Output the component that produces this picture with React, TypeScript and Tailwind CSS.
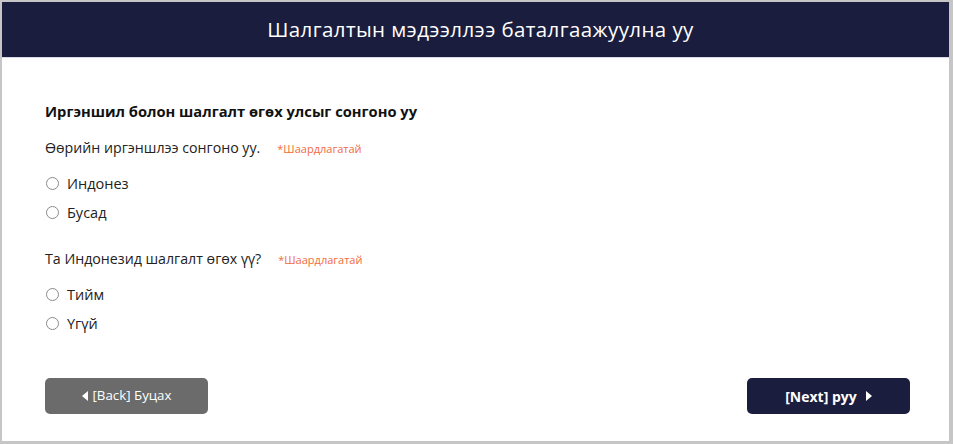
import { useState } from "react";

const font = { fontFamily: '"Open Sans", "Noto Sans", sans-serif' };

type Q = { label: string; name: string; options: string[] };

const questions: Q[] = [
  { label: "Өөрийн иргэншлээ сонгоно уу.", name: "citizenship", options: ["Индонез", "Бусад"] },
  { label: "Та Индонезид шалгалт өгөх үү?", name: "country", options: ["Тийм", "Үгүй"] },
];

function Radio({ checked, onClick, label }: { checked: boolean; onClick: () => void; label: string }) {
  return (
    <label className="flex items-center gap-[8px] h-[29px] pl-[1px] cursor-pointer" onClick={onClick}>
      <span className="w-[13px] h-[13px] rounded-full border border-[#8a8a8a] bg-white flex items-center justify-center">
        {checked && <span className="w-[7px] h-[7px] rounded-full bg-[#1a1d3d]" />}
      </span>
      <span className="text-[14.5px] text-[#222]">{label}</span>
    </label>
  );
}

export default function App() {
  const [answers, setAnswers] = useState<Record<string, string>>({});

  return (
    <div className="w-[953px] h-[444px] bg-[#c6c6c6] pt-[2px] pl-[2px] pr-[4px] pb-[3px]" style={font}>
      <div className="h-full bg-white flex flex-col">
        {/* Header */}
        <div className="h-[56px] bg-[#1a1d3d] flex items-center justify-center border-b border-[#d8dbe6]">
          <h1 className="text-white text-[20.5px] tracking-[0.4px] pl-[10px]">Шалгалтын мэдээллээ баталгаажуулна уу</h1>
        </div>

        <div className="flex-1 flex flex-col pl-[43px] pr-[39px]">
          <h2 className="mt-[42px] text-[14.7px] font-bold text-[#111]">Иргэншил болон шалгалт өгөх улсыг сонгоно уу</h2>

          {questions.map((q, i) => (
            <div key={q.name} className={i === 0 ? "mt-[15px]" : "mt-[21px]"}>
              <div className="flex items-baseline gap-[17px] h-[22px]">
                <span className="text-[14.2px] text-[#222]">{q.label}</span>
                <span className="text-[11px] text-[#f26a3d]">*Шаардлагатай</span>
              </div>
              <div className="mt-[10px] flex flex-col">
                {q.options.map((o) => (
                  <Radio
                    key={o}
                    label={o}
                    checked={answers[q.name] === o}
                    onClick={() => setAnswers({ ...answers, [q.name]: o })}
                  />
                ))}
              </div>
            </div>
          ))}

          <div className="mt-auto mb-[27px] flex justify-between">
            <button className="w-[163px] h-[36px] rounded-[5px] bg-[#6b6b6b] text-white text-[13.3px] flex items-center justify-center gap-[4px]">
              <svg width="7" height="10" viewBox="0 0 7 10"><path d="M6 0 L0 5 L6 10 Z" fill="white" /></svg>
              [Back] Буцах
            </button>
            <button className="w-[163px] h-[36px] rounded-[5px] bg-[#1a1d3d] text-white text-[14px] font-bold flex items-center justify-center gap-[8px]">
              [Next] руу
              <svg width="7" height="10" viewBox="0 0 7 10"><path d="M1 0 L7 5 L1 10 Z" fill="white" /></svg>
            </button>
          </div>
        </div>
      </div>
    </div>
  );
}
